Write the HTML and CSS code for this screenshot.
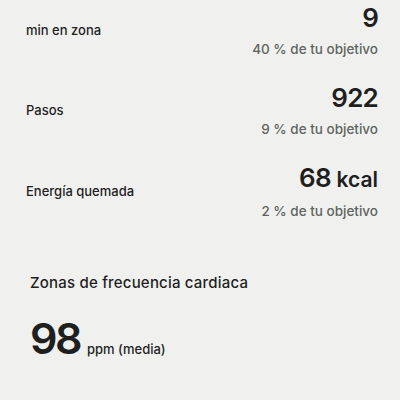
FILE: index.html
```html
<!DOCTYPE html>
<html lang="es">
<head>
  <meta charset="UTF-8">
  <title>Resumen de actividad</title>
  <meta name="viewport" content="width=device-width, initial-scale=1.0">
  <link rel="stylesheet" href="styles.css">
</head>
<body>
  <div class="stats">
    <div class="stat">
      <div class="stat-label">min en zona</div>
      <div class="stat-value">
        <div class="stat-num">9</div>
        <div class="stat-goal">40 % de tu objetivo</div>
      </div>
    </div>
    <div class="stat">
      <div class="stat-label">Pasos</div>
      <div class="stat-value">
        <div class="stat-num">922</div>
        <div class="stat-goal">9 % de tu objetivo</div>
      </div>
    </div>
    <div class="stat">
      <div class="stat-label">Energía quemada</div>
      <div class="stat-value">
        <div class="stat-num">68 <span class="unit">kcal</span></div>
        <div class="stat-goal">2 % de tu objetivo</div>
      </div>
    </div>
  </div>

  <!-- Zonas de frecuencia -->
  <div class="heart">
    <h2>Zonas de frecuencia cardiaca</h2>
    <div class="heart-avg">
      <span class="heart-num">98</span>
      <span class="heart-unit">ppm (media)</span>
    </div>
  </div>
</body>
</html>
```

FILE: styles.css
```css
body {
  margin: 0;
  background: #f0f1ef;
  font-family: 'Inter', 'Noto Sans', Arial, sans-serif;
  color: #1f1f1f;
}
.stats {
  padding: 3px 22px 0 26px;
}
.stat {
  display: flex;
  justify-content: space-between;
  align-items: center;
  padding-bottom: 25px;
}
.stat-label {
  font-size: 13px;
  font-weight: 500;
  margin-top: -2px;
}
.stat-value {
  text-align: right;
}
.stat-num {
  font-size: 26px;
  line-height: 30px;
  font-weight: 600;
  letter-spacing: -0.8px;
}
.stat-num .unit {
  font-size: 21px;
  letter-spacing: 0;
}
.stat-goal {
  margin-top: 7px;
  font-size: 13.5px;
  line-height: 18px;
  font-weight: 500;
  color: #606461;
}
.heart {
  padding: 28px 30px 0;
}
.heart h2 {
  margin: 0;
  font-size: 15px;
  line-height: 20px;
  font-weight: 500;
  letter-spacing: 0.2px;
}
.heart-avg {
  margin-top: 21px;
  display: flex;
  align-items: baseline;
  gap: 7px;
}
.heart-num {
  font-size: 43px;
  line-height: 48px;
  font-weight: 600;
  letter-spacing: -2.5px;
}
.heart-unit {
  font-size: 13px;
  font-weight: 500;
}
```
